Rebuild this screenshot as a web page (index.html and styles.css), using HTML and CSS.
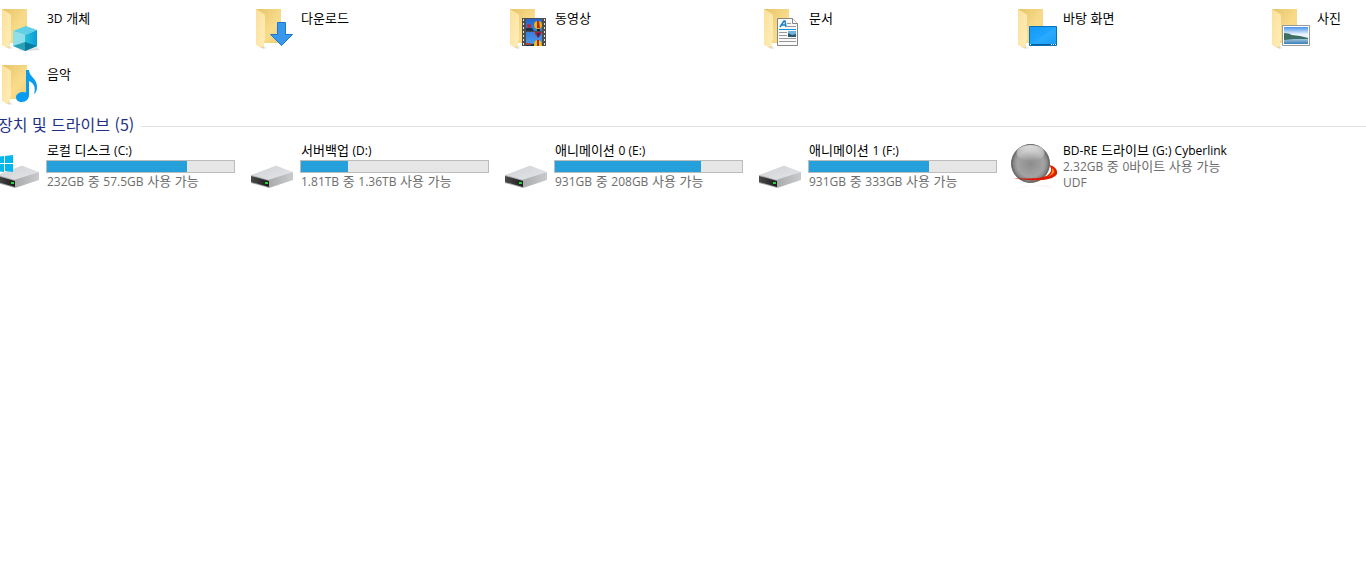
FILE: index.html
```html
<!DOCTYPE html>
<html lang="ko">
<head>
<meta charset="utf-8">
<title>내 PC</title>
<link rel="stylesheet" href="styles.css">
</head>
<body>
<svg class="defs" aria-hidden="true">
  <defs>
    <linearGradient id="back" x1="0" y1="0" x2="1" y2="1"><stop offset="0" stop-color="#e6c369"/><stop offset=".6" stop-color="#f9dc8b"/><stop offset="1" stop-color="#efcc70"/></linearGradient>
    <linearGradient id="flap" x1="0" y1="0" x2="1" y2="1"><stop offset="0" stop-color="#fbe09a"/><stop offset="1" stop-color="#ffeebb"/></linearGradient>
    <linearGradient id="screen" x1="0" y1="0" x2="1" y2="1"><stop offset="0" stop-color="#1698f5"/><stop offset=".5" stop-color="#1da5ff"/><stop offset=".51" stop-color="#2cabff"/><stop offset="1" stop-color="#169cf5"/></linearGradient>
    <linearGradient id="sky" x1="0" y1="0" x2="0" y2="1"><stop offset="0" stop-color="#4a94e8"/><stop offset=".45" stop-color="#f0f8fd"/><stop offset="1" stop-color="#b6d8ee"/></linearGradient>
    <linearGradient id="lake" x1="0" y1="0" x2="0" y2="1"><stop offset="0" stop-color="#b4d2e5"/><stop offset="1" stop-color="#3a7fb4"/></linearGradient>
    <linearGradient id="film" x1="0" y1="0" x2="0" y2="1"><stop offset="0" stop-color="#2465cc"/><stop offset="1" stop-color="#4f9bea"/></linearGradient>
    <linearGradient id="cubeR" x1="0" y1="0" x2="1" y2="0"><stop offset="0" stop-color="#27c0dc"/><stop offset="1" stop-color="#0a9bd6"/></linearGradient>
    <linearGradient id="top" x1="0" y1="0" x2="1" y2="1"><stop offset="0" stop-color="#cfd0d3"/><stop offset="1" stop-color="#e6e7ea"/></linearGradient>
    <linearGradient id="side" x1="0" y1="0" x2="1" y2="0"><stop offset="0" stop-color="#a9aaac"/><stop offset="1" stop-color="#c9cacc"/></linearGradient>
    <linearGradient id="front" x1="0" y1="0" x2="1" y2="0"><stop offset="0" stop-color="#4a4a4a"/><stop offset="1" stop-color="#1c1c1c"/></linearGradient>
    <radialGradient id="ball" cx=".5" cy=".5" r=".5"><stop offset="0" stop-color="#8d8d8d"/><stop offset=".7" stop-color="#a3a3a3"/><stop offset=".88" stop-color="#8a8a8a"/><stop offset="1" stop-color="#5f5f5f"/></radialGradient>
    <linearGradient id="shine" x1="0" y1="0" x2="0" y2="1"><stop offset="0" stop-color="#fff" stop-opacity=".75"/><stop offset="1" stop-color="#fff" stop-opacity="0"/></linearGradient>
    <linearGradient id="ring" x1="0" y1="0" x2="1" y2="0"><stop offset="0" stop-color="#c50d00"/><stop offset=".6" stop-color="#e01800"/><stop offset="1" stop-color="#d92000"/></linearGradient>
    <symbol id="folder" viewBox="0 0 48 48">
      <path d="M9 4h25v34H9z" fill="url(#back)"/>
      <path d="M9 4l8 5q1 1 1 2v24l-1 1v8l-8-4z" fill="url(#flap)"/>
      <path d="M12 42l5 2 3-1-3-2z" fill="#000" opacity=".08"/>
    </symbol>
    <symbol id="drive" viewBox="0 0 48 48">
      <path d="M4 33L28 24q1-.5 2 0l16 6-24 9z" fill="url(#top)"/>
      <path d="M21 38l25-8v8L22 46z" fill="url(#side)"/>
      <path d="M4 33l18 5v8L4 41z" fill="#a6a7a9"/>
      <path d="M4 34l18 5v6L4 40z" fill="url(#front)"/>
      <path d="M18 40h3v2h-3z" fill="#25d33a"/>
    </symbol>
  </defs>
</svg>
<main class="explorer">
  <section aria-label="폴더">
    <ul class="tiles folders">
      <li class="tile">
        <svg class="icon" viewBox="0 0 48 48" aria-hidden="true"><use href="#folder"/>
          <path d="M23 45l12 1 12-1-3-3z" fill="#000" opacity=".12"/>
          <path d="M20 26l13-5 11 4-12 5z" fill="#5fd0e6"/>
          <path d="M20 26l12 4v16l-12-5z" fill="#8fdfeb"/>
          <path d="M32 30l12-5v16l-12 5z" fill="url(#cubeR)"/>
          <path d="M20 41l12-4v9z" fill="#2a9fb5"/><path d="M32 37l12 4-12 5z" fill="#067d9c"/>
        </svg>
        <div class="info"><span class="name"><span class="latin">3D</span> 개체</span></div>
      </li>
      <li class="tile">
        <svg class="icon" viewBox="0 0 48 48" aria-hidden="true"><use href="#folder"/>
          <path d="M30.500 17.500h8v12h7L34.500 40.500l-11-11h7z" fill="#3898ec" stroke="#1f78cf"/>
        </svg>
        <div class="info"><span class="name">다운로드</span></div>
      </li>
      <li class="tile">
        <svg class="icon" viewBox="0 0 48 48" aria-hidden="true"><use href="#folder"/>
          <path d="M21 13h24v28H21z" fill="#4d4d4d"/>
          <path d="M25 14h16v12H25zM25 27h16v14H25z" fill="url(#film)"/>
          <path d="M22.500 14v27M43.500 14v27" stroke="#e4e4e4" stroke-width="1" stroke-dasharray="2 2"/>
          <path d="M25 23h6l2 3h-8zM25 38l6 1 10-1v3H25z" fill="#18344b"/>
          <ellipse cx="37" cy="20" rx="4" ry="4" fill="#e3b719"/><path d="M36 16h2l1 7h-3z" fill="#b5261d"/><path d="M36 24h3v2h-3z" fill="#252019"/>
          <ellipse cx="28" cy="21" rx="2" ry="2" fill="#c3252e"/>
          <path d="M34 27h7l-1 2-3 4-3-4z" fill="#b61f2c"/><path d="M36 28h3l-1 4h-1z" fill="#242a68"/>
          <path d="M33 40q0-5 4-5t4 6h-8z" fill="#ecc119"/><path d="M36 35h2v6h-2z" fill="#b5261d"/>
          <path d="M25 38h5v2h-5z" fill="#b84430"/>
        </svg>
        <div class="info"><span class="name">동영상</span></div>
      </li>
      <li class="tile">
        <svg class="icon" viewBox="0 0 48 48" aria-hidden="true"><use href="#folder"/>
          <path d="M22.500 13.500h15l5 5v22h-20z" fill="#fafafa" stroke="#858585"/>
          <path d="M37.500 13.500v5h5" fill="#fff" stroke="#858585"/>
          <path d="M24 24.500h17" stroke="#1293d6"/>
          <path d="M25 22l4-6h1l1 6M26 20h5" fill="none" stroke="#1683c7" stroke-width="1.500"/>
          <path d="M32 18.500h4M32 21.500h9M24 27.500h8M24 30.500h8M24 33.500h17M24 36.500h17" stroke="#999"/>
          <path d="M33 26h8v6h-8z" fill="#70b3df"/><path d="M33 28l4 2 4-1v3h-8z" fill="#2c586c"/>
        </svg>
        <div class="info"><span class="name">문서</span></div>
      </li>
      <li class="tile">
        <svg class="icon" viewBox="0 0 48 48" aria-hidden="true"><use href="#folder"/>
          <path d="M20.500 21.500h27v19h-27z" fill="url(#screen)" stroke="#0872b8"/>
          <path d="M21 39.500h27" stroke="#075c9d"/><path d="M21 39.500h1M42 39.500h1M44 39.500h1M46 39.500h1" stroke="#fff"/>
        </svg>
        <div class="info"><span class="name">바탕 화면</span></div>
      </li>
      <li class="tile">
        <svg class="icon" viewBox="0 0 48 48" aria-hidden="true"><use href="#folder"/>
          <path d="M19.500 20.500h27v20h-27z" fill="#fff" stroke="#999"/>
          <path d="M21 22h24v17H21z" fill="url(#sky)"/>
          <path d="M21 33h24v6H21z" fill="url(#lake)"/>
          <path d="M21 28q5 0 8 2l8 1 8 2v1H31l-10 1z" fill="#3d6f62"/>
        </svg>
        <div class="info"><span class="name">사진</span></div>
      </li>
      <li class="tile">
        <svg class="icon" viewBox="0 0 48 48" aria-hidden="true"><use href="#folder"/>
          <path d="M33 9h3c0 7 8 8 8 17 0 3-1 6-3 7 2-6 0-11-5-13v14c0 4-3 7-7 7s-6-2-6-5 4-5 7-5l3 .5z" fill="#079cf0"/>
        </svg>
        <div class="info"><span class="name">음악</span></div>
      </li>
    </ul>
  </section>
  <section aria-labelledby="drives">
    <h2 class="group" id="drives">장치 및 드라이브 (5)</h2>
    <ul class="tiles drives">
      <li class="tile">
        <svg class="icon" viewBox="0 0 48 48" aria-hidden="true"><use href="#drive"/>
          <path d="M3 15l8-1v7H3zM12 14l8-1v8h-8zM3 22h8v8l-8-1zM12 22h8v8l-8-1z" fill="#00b7f0"/>
        </svg>
        <div class="info"><span class="name">로컬 디스크 <span class="latin">(C:)</span></span><div class="bar" role="img" aria-label="사용량"><div class="used" style="width:75%"></div></div><span class="detail"><span class="latin">232GB</span> 중 <span class="latin">57.5GB</span> 사용 가능</span></div>
      </li>
      <li class="tile">
        <svg class="icon" viewBox="0 0 48 48" aria-hidden="true"><use href="#drive"/></svg>
        <div class="info"><span class="name">서버백업 <span class="latin">(D:)</span></span><div class="bar" role="img" aria-label="사용량"><div class="used" style="width:25%"></div></div><span class="detail"><span class="latin">1.81TB</span> 중 <span class="latin">1.36TB</span> 사용 가능</span></div>
      </li>
      <li class="tile">
        <svg class="icon" viewBox="0 0 48 48" aria-hidden="true"><use href="#drive"/></svg>
        <div class="info"><span class="name">애니메이션 <span class="latin">0 (E:)</span></span><div class="bar" role="img" aria-label="사용량"><div class="used" style="width:78%"></div></div><span class="detail"><span class="latin">931GB</span> 중 <span class="latin">208GB</span> 사용 가능</span></div>
      </li>
      <li class="tile">
        <svg class="icon" viewBox="0 0 48 48" aria-hidden="true"><use href="#drive"/></svg>
        <div class="info"><span class="name">애니메이션 <span class="latin">1 (F:)</span></span><div class="bar" role="img" aria-label="사용량"><div class="used" style="width:64%"></div></div><span class="detail"><span class="latin">931GB</span> 중 <span class="latin">333GB</span> 사용 가능</span></div>
      </li>
      <li class="tile">
        <svg class="icon" viewBox="0 0 48 48" aria-hidden="true">
          <path d="M6 47q16-7 40 0-10-5-20-4z" fill="#e01800" opacity=".06"/>
          <circle cx="21.500" cy="21.500" r="19" fill="url(#ball)" stroke="#686868"/>
          <ellipse cx="21.500" cy="11" rx="14" ry="8" fill="url(#shine)"/>
          <path d="M40 23c6 1 9 5 8 9-4 7-24 8-44 4 13 1 29 1 35-3 4-3 4-7 1-10z" fill="url(#ring)"/>
          <path d="M43 26q4 3 1 6l-5 3q5-4 4-9z" fill="#ff8a1e"/>
        </svg>
        <div class="info"><span class="name"><span class="latin">BD-RE</span> 드라이브 <span class="latin">(G:) Cyberlink</span></span><span class="detail"><span class="latin">2.32GB</span> 중 <span class="latin">0</span>바이트 사용 가능</span><span class="detail"><span class="latin">UDF</span></span></div>
      </li>
    </ul>
  </section>
</main>
</body>
</html>
```
FILE: styles.css
```css
* { box-sizing: border-box; }
body {
  margin: 0;
  background: #fff;
  color: #000;
  font: 13px/16px "Noto Sans CJK KR", sans-serif;
  overflow-x: hidden;
}
.defs { position: absolute; width: 0; height: 0; }
.explorer { padding-top: 5px; overflow: hidden; }
.tiles {
  display: grid;
  grid-template-columns: repeat(6, 254px);
  row-gap: 8px;
  margin: 0 0 0 -7px;
  padding: 0;
  list-style: none;
}
.tile { display: flex; gap: 5px; min-height: 48px; }
.icon { flex: none; width: 48px; height: 48px; }
.drives .icon { margin-top: 4px; }
.info { display: flex; flex-direction: column; width: 189px; padding-top: 4px; white-space: nowrap; }
.folders .info { padding-top: 5px; }
.name, .detail { height: 16px; padding-left: 1px; }
.latin { font-family: "Open Sans", sans-serif; font-size: 12px; line-height: 12px; }
.detail { color: #6d6d6d; }
.bar { height: 13px; margin-top: 2px; border: 1px solid #bcbcbc; background: #e6e6e6; }
.used { height: 100%; background: #26a0da; }
.group {
  display: flex;
  align-items: center;
  gap: 7px;
  margin: 5px 0 4px -2px;
  color: #1e3287;
  font-size: 16px;
  font-weight: 400;
  line-height: 20px;
}
.group::after { content: ""; flex: 1; height: 1px; margin-top: 4px; background: #e2e2e2; }
```
